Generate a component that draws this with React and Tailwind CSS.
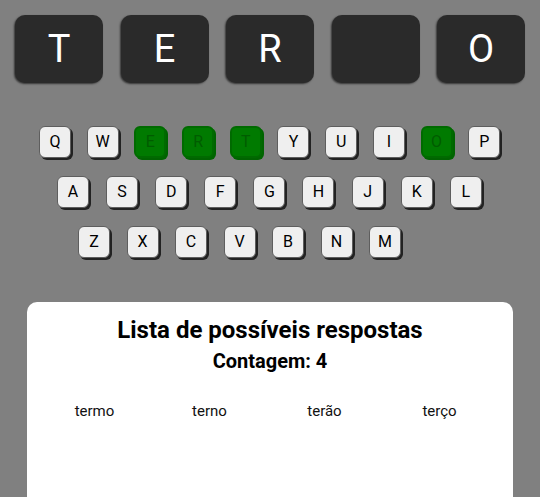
import React from 'react';

const tiles = ['T', 'E', 'R', '', 'O'];
const green = ['E', 'R', 'T', 'O'];

const rows = [
  { keys: 'QWERTYUIOP'.split(''), cls: 'pl-[39px] gap-[15.7px]' },
  { keys: 'ASDFGHJKL'.split(''), cls: 'pl-[57px] gap-[17.1px]' },
  { keys: 'ZXCVBNM'.split(''), cls: 'pl-[78px] gap-[16.5px]' },
];

const words = ['termo', 'terno', 'terão', 'terço'];

function Key({ k }) {
  const isGreen = green.includes(k);
  return (
    <div
      className={`w-[32px] h-[32px] flex items-center justify-center rounded-[6px] text-[16px] ${
        isGreen
          ? 'bg-[#007a00] border-2 border-[#006a00] text-[#005c00] shadow-[2px_2px_0_#006400]'
          : 'bg-[#efefef] border border-[#5e5e5e] text-black shadow-[2px_2px_0_#222]'
      }`}
    >
      {k}
    </div>
  );
}

export default function App() {
  return (
    <div className="h-screen flex flex-col bg-[#808080] font-['Roboto','Liberation_Sans',sans-serif] overflow-hidden">
      {/* Guess tiles */}
      <div className="flex justify-center gap-[17.5px] pt-[15px]">
        {tiles.map((t, i) => (
          <div
            key={i}
            className="w-[88px] h-[68px] rounded-[10px] bg-[#2a2a2a] shadow-[-1px_1px_2px_rgba(0,0,0,0.6)] flex items-center justify-center text-white text-[38px]"
          >
            {t}
          </div>
        ))}
      </div>

      {/* Keyboard */}
      <div className="mt-[43px] flex flex-col gap-[18px]">
        {rows.map((r, i) => (
          <div key={i} className={`flex ${r.cls}`}>
            {r.keys.map((k) => (
              <Key key={k} k={k} />
            ))}
          </div>
        ))}
      </div>

      {/* Possible answers */}
      <div className="flex-1 mt-[44px] mx-[27px] bg-white rounded-t-[10px] pt-[13px]">
        <h1 className="text-center text-[24px] font-bold leading-[30px] text-black">Lista de possíveis respostas</h1>
        <h2 className="text-center text-[20px] font-bold leading-[24px] mt-[4px] text-black">Contagem: 4</h2>
        <div className="grid grid-cols-4 ml-[10px] mr-[16px] mt-[27px]">
          {words.map((w) => (
            <div key={w} className="text-center text-[15px] text-[#111]">
              {w}
            </div>
          ))}
        </div>
      </div>
    </div>
  );
}
